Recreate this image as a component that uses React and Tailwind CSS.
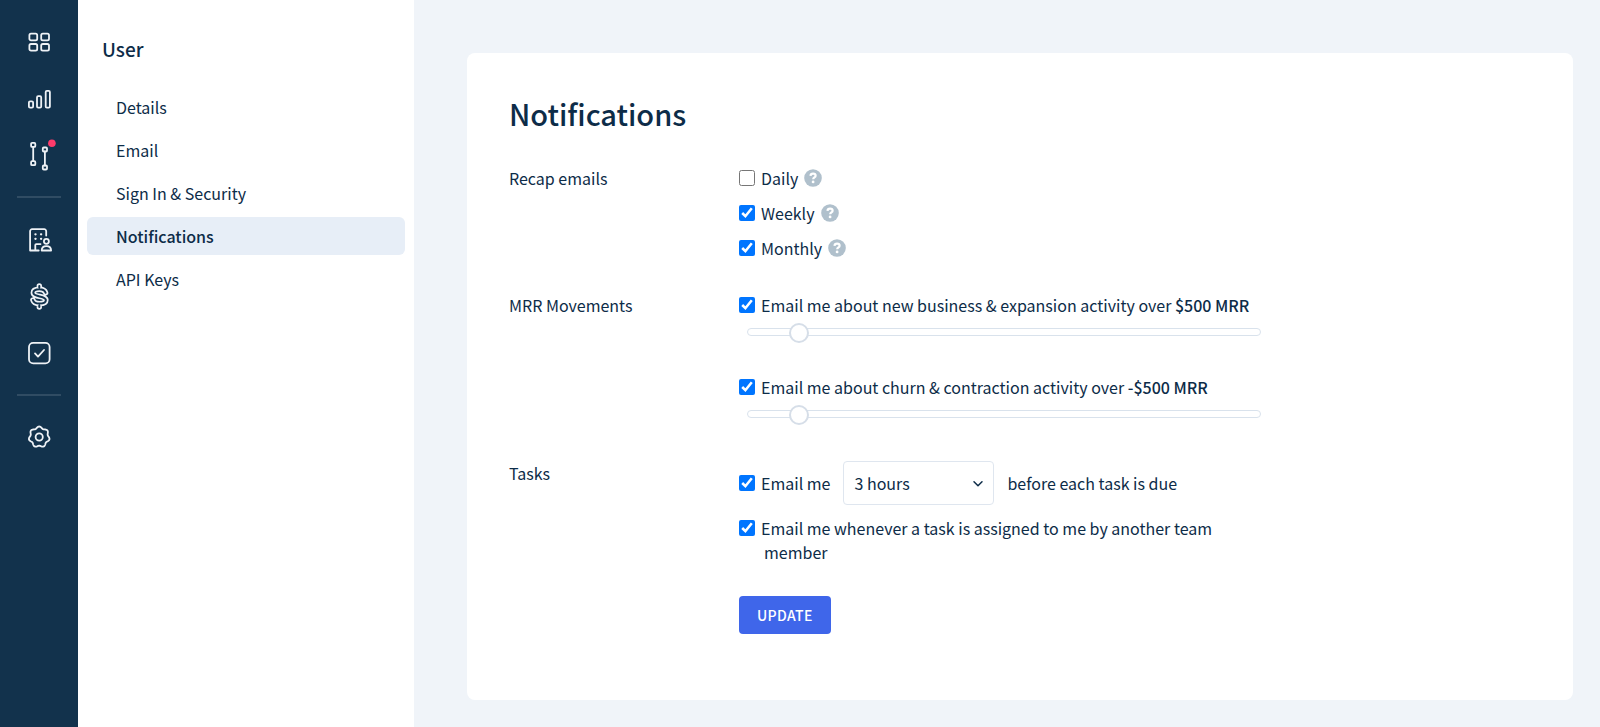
import { useState } from "react";

const navLinks = ["Details", "Email", "Sign In & Security", "Notifications", "API Keys"];

const Icon = ({ children, className = "" }) => (
    <svg viewBox="0 0 24 28" className={"h-7 w-6 overflow-visible " + className} fill="none" stroke="currentColor" strokeWidth="1.8" strokeLinecap="round" strokeLinejoin="round" aria-hidden="true">
        {children}
    </svg>
)

const GridIcon = () => (
    <Icon>
        <rect x="2.4" y="5.7" width="7.8" height="6.6" rx="1.6" />
        <rect x="14.2" y="5.7" width="7.8" height="6.6" rx="1.6" />
        <rect x="2.4" y="16" width="7.8" height="6.6" rx="1.6" />
        <rect x="14.2" y="16" width="7.8" height="6.6" rx="1.6" />
    </Icon>
)

const BarsIcon = () => (
    <Icon>
        <rect x="1.9" y="17.4" width="4.2" height="6.2" rx="1.2" />
        <rect x="10" y="12.2" width="4.2" height="11.4" rx="1.2" />
        <rect x="18.7" y="6.9" width="4.2" height="16.7" rx="1.2" />
    </Icon>
)

const BranchIcon = () => (
    <Icon>
        <rect x="4.1" y="2.9" width="4.2" height="4" rx="1" />
        <rect x="4.1" y="21.2" width="4.2" height="4" rx="1" />
        <path d="M6.2 6.9v14.3" />
        <rect x="15.8" y="7.5" width="4.2" height="4" rx="1" />
        <rect x="15.8" y="25.5" width="4.2" height="4" rx="1" />
        <path d="M17.9 11.5v14" />
        <circle cx="24.9" cy="3.2" r="3.8" fill="#ff3b6b" stroke="none" />
    </Icon>
)

const CompanyIcon = () => (
    <Icon>
        <path d="M19.2 9.5V5.2a2 2 0 0 0-2-2H5.1a2 2 0 0 0-2 2v19.3h5.2v-5.4a1 1 0 0 1 1-1h4.2M8.3 24.5h3.4" />
        <path d="M8.4 8.3h.2M14 8.3h.2M8.4 12.8h.2M14 12.8h.2" strokeWidth="2.2" />
        <circle cx="19.4" cy="15.3" r="2.5" />
        <path d="M14.7 24.5c0-3 1.6-4.4 4.7-4.4s4.7 1.4 4.7 4.4z" />
    </Icon>
)

const dollarPath = "M12.3 3.9v1.6M12.3 23.4V25M18.6 10.8c-.7-2.4-2.9-3.6-6.3-3.6-3.7 0-6 1.3-6 3.5 0 4.7 12.6 2.7 12.6 7.3 0 2.2-2.4 3.6-6.4 3.6-3.6 0-5.9-1.2-6.6-3.6"

const DollarIcon = () => (
    <Icon>
        <path d={dollarPath} strokeWidth="5.4" />
        <path d={dollarPath} strokeWidth="2" stroke="#12324c" />
    </Icon>
)

const TaskIcon = () => (
    <Icon>
        <rect x="2" y="4.8" width="20.6" height="20.6" rx="4.2" />
        <path d="m8 15.4 3 3.2 6-6.6" />
    </Icon>
)

// seven rounded teeth around the centre
const gearPoints = Array.from({ length: 112 }, (_, i) => {
    const a = (i / 112) * Math.PI * 2;
    const r = 9.6 + Math.cos(a * 7) * 0.9;
    return (12.2 + r * Math.sin(a)).toFixed(2) + "," + (13 - r * Math.cos(a)).toFixed(2);
}).join(" ");

const GearIcon = () => (
    <Icon>
        <polygon points={gearPoints} />
        <circle cx="12.2" cy="13" r="3.6" />
    </Icon>
)

const RailLink = ({ label, children }) => (
    <a href="#" aria-label={label} className="flex h-14 w-full items-center justify-center">{children}</a>
)

const RailDivider = () => <hr className="my-3.5 h-0.5 w-11 border-0 bg-[#304c63]" />

const Rail = () => (
    <nav className="flex w-[78px] shrink-0 flex-col items-center bg-[#12324c] pt-3.5 text-[#eef2f6]">
        <RailLink label="Dashboard"><GridIcon /></RailLink>
        <RailLink label="Reports"><BarsIcon /></RailLink>
        <RailLink label="Pipelines"><BranchIcon /></RailLink>
        <RailDivider />
        <RailLink label="Customers"><CompanyIcon /></RailLink>
        <RailLink label="Revenue"><DollarIcon /></RailLink>
        <RailLink label="Tasks"><TaskIcon /></RailLink>
        <RailDivider />
        <RailLink label="Settings"><GearIcon /></RailLink>
    </nav>
)

const SideNav = () => (
    <aside className="w-[336px] shrink-0 bg-white px-[9px] pt-[35px]">
        <h2 className="px-[15px] text-[19px] font-medium leading-7">User</h2>
        <ul className="mt-[25px] flex flex-col gap-[5px]">
            {
                navLinks.map((link) => (
                    <li key={link}>
                        <a
                            href="#"
                            className={"flex h-[38px] items-center rounded-md px-[29px] " + (link === "Notifications" ? "bg-[#e7eef7] font-medium" : "")}>
                            {link}
                        </a>
                    </li>
                ))
            }
        </ul>
    </aside>
)

const Check = ({ checked = true, children }) => {
    let [on, setOn] = useState(checked);

    return (
        <label className="flex gap-1.5">
            <input
                type="checkbox"
                checked={on}
                onChange={() => setOn(!on)}
                className="mt-1 size-4 shrink-0 accent-[#0075ff]" />
            <span className="pl-[3px] -indent-[3px]">{children}</span>
        </label>
    )
}

const Help = ({ label }) => (
    <button type="button" aria-label={label} className="text-[#b0c0cc]">
        <svg viewBox="0 0 18 18" className="size-[18px]" fill="none" aria-hidden="true">
            <circle cx="9" cy="9" r="8.8" fill="currentColor" />
            <path d="M6.5 6.9c.1-1.5 1.1-2.3 2.6-2.3s2.5.8 2.5 2.1c0 1.8-2.4 1.7-2.4 3.6" stroke="#fff" strokeWidth="2.2" />
            <circle cx="9.1" cy="12.9" r="1.4" fill="#fff" />
        </svg>
    </button>
)

const Slider = ({ label }) => {
    let [value, setValue] = useState(500);

    return (
        <input
            type="range"
            min="0"
            max="6000"
            value={value}
            aria-label={label}
            onChange={(e) => setValue(e.target.value)}
            className="ml-2 mt-[5px] block h-5 w-[514px] max-w-full appearance-none bg-transparent [&::-webkit-slider-runnable-track]:h-2 [&::-webkit-slider-runnable-track]:rounded-full [&::-webkit-slider-runnable-track]:border [&::-webkit-slider-runnable-track]:border-[#d9e2ec] [&::-webkit-slider-thumb]:-mt-1.5 [&::-webkit-slider-thumb]:size-5 [&::-webkit-slider-thumb]:appearance-none [&::-webkit-slider-thumb]:rounded-full [&::-webkit-slider-thumb]:border-2 [&::-webkit-slider-thumb]:border-[#d6dee8] [&::-webkit-slider-thumb]:bg-white" />
    )
}

const Row = ({ title, children }) => (
    <section className="flex">
        <h3 className="w-[230px] shrink-0">{title}</h3>
        <div className="w-[522px]">{children}</div>
    </section>
)

const App = () => {
    let [before, setBefore] = useState("3 hours");

    return (
        <div className="flex min-h-screen bg-[#f0f4f9] font-['Noto_Sans_CJK_SC',sans-serif] text-base leading-6 text-[#0d2c48]">
            <Rail />
            <SideNav />
            <main className="flex grow pb-[27px] pl-[53px] pr-[27px] pt-[53px]">
                <form className="grow rounded-lg bg-white px-[42px] pb-[65px] pt-[38px]" onSubmit={(e) => e.preventDefault()}>
                    <h1 className="text-[29px] font-medium leading-11">Notifications</h1>

                    <div className="mt-[31px]">
                        <Row title="Recap emails">
                            <div className="flex flex-col gap-[11px]">
                                <div className="flex items-center gap-1.5"><Check checked={false}>Daily</Check><Help label="About daily emails" /></div>
                                <div className="flex items-center gap-1.5"><Check>Weekly</Check><Help label="About weekly emails" /></div>
                                <div className="flex items-center gap-1.5"><Check>Monthly</Check><Help label="About monthly emails" /></div>
                            </div>
                        </Row>
                    </div>

                    <div className="mt-[33px]">
                        <Row title="MRR Movements">
                            <Check>Email me about new business &amp; expansion activity over <b className="font-medium">$500 MRR</b></Check>
                            <Slider label="New business and expansion threshold" />
                            <div className="mt-[33px]">
                                <Check>Email me about churn &amp; contraction activity over <b className="font-medium">-$500 MRR</b></Check>
                                <Slider label="Churn and contraction threshold" />
                            </div>
                        </Row>
                    </div>

                    <div className="mt-[37px]">
                        <Row title="Tasks">
                            <div className="flex items-center gap-[13px]">
                                <Check>Email me</Check>
                                <div className="relative">
                                    <select
                                        value={before}
                                        aria-label="Reminder time"
                                        onChange={(e) => setBefore(e.target.value)}
                                        className="h-11 w-[151px] appearance-none rounded border border-[#dfe6ef] bg-white px-2.5">
                                        <option>1 hour</option>
                                        <option>3 hours</option>
                                        <option>1 day</option>
                                    </select>
                                    <svg viewBox="0 0 12 12" className="pointer-events-none absolute right-2.5 top-4 size-3" fill="none" stroke="currentColor" strokeWidth="1.5" strokeLinecap="round" strokeLinejoin="round" aria-hidden="true">
                                        <path d="m2 4.7 4 4 4-4" />
                                    </svg>
                                </div>
                                <span>before each task is due</span>
                            </div>
                            <div className="mt-[11px]">
                                <Check>Email me whenever a task is assigned to me by another team member</Check>
                            </div>
                            <button type="submit" className="mt-8 h-[38px] rounded bg-[#3f66ea] px-[18px] text-sm font-medium tracking-wide text-white">UPDATE</button>
                        </Row>
                    </div>
                </form>
            </main>
        </div>
    )
}

export default App;
